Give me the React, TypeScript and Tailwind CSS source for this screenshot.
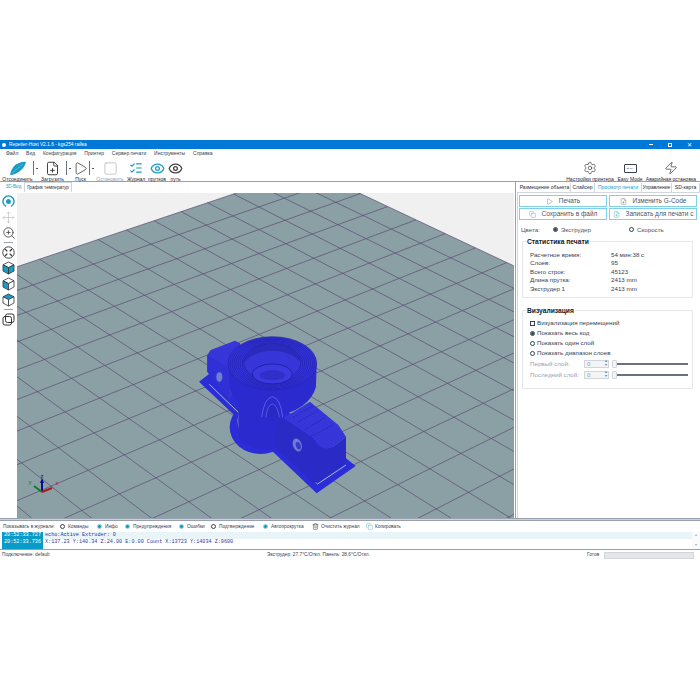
import { Copy, Eye, FilePlus, ListChecks, Move, Play, Settings, Square, Trash2, Zap, ZoomIn } from "lucide-react";
import type { ReactNode } from "react";

const F = [308, 169];
const V1 = [2597, -600];
const V2 = [-1326, -600];
const A = 0.0105;
const B = 0.0155;
const N = 30;

function pt(u: number, v: number) {
    const s = -A * u;
    const t = -B * v;
    const w = 1 + s + t;
    return [(F[0] + s * V1[0] + t * V2[0]) / w, (F[1] + s * V1[1] + t * V2[1]) / w];
}

function Floor() {
    const idx = Array.from({ length: N + 1 }, (_, i) => i);
    const poly = [pt(0, 0), pt(N, 0), pt(N, N), pt(0, N)].map((p) => p.join(",")).join(" ");
    return (
        <g>
            <polygon points={poly} fill="#8aa0a4" />
            {idx.map((i) => {
                const a = pt(i, 0);
                const b = pt(i, N);
                const c = pt(0, i);
                const d = pt(N, i);
                return (
                    <g key={i} stroke="#5b4a72" strokeWidth="0.7">
                        <line x1={a[0]} y1={a[1]} x2={b[0]} y2={b[1]} />
                        <line x1={c[0]} y1={c[1]} x2={d[0]} y2={d[1]} />
                    </g>
                );
            })}
        </g>
    );
}

function Model() {
    const rim = [133, 127, 121, 115, 109, 103, 97, 91];
    return (
        <g transform="translate(190 330) scale(0.3333)">
            <defs>
                <pattern id="fine" width="3" height="3" patternUnits="userSpaceOnUse" patternTransform="rotate(40)">
                    <rect width="3" height="3" fill="#2c2cd8" />
                    <rect width="3" height="1" fill="#2424bc" />
                </pattern>
                <pattern id="soft" width="6" height="6" patternUnits="userSpaceOnUse" patternTransform="rotate(-30)">
                    <rect width="6" height="6" fill="#3a3ae2" />
                    <rect width="6" height="2" fill="#2d2dc8" />
                </pattern>
            </defs>
            {/* brim */}
            <polygon points="27,155 60,130 150,200 300,250 497,408 380,490" fill="#2c2cd8" />
            <ellipse cx="212" cy="292" rx="93" ry="80" fill="#2c2cd8" />
            <path d="M58,163 L148,250 Q135,290 165,325 Q205,355 250,340 L383,462 L468,405" fill="none" stroke="#a9bdb9" strokeWidth="3" />
            {/* lower cylinder */}
            <path d="M145,200 L145,320 Q180,362 235,362 L285,340 L285,200 Z" fill="url(#fine)" />
            {/* left block */}
            <path d="M52,75 L62,60 L135,32 L150,40 L150,150 L118,210 L52,125 Z" fill="url(#soft)" />
            <path d="M52,75 L115,110 L118,210 L52,125 Z" fill="#3030d6" />
            <ellipse cx="88" cy="141" rx="9" ry="14" fill="#6f7fce" />
            {/* upper cylinder */}
            <path d="M115,100 L118,170 Q140,240 247,262 Q360,240 378,170 L380,100 Z" fill="url(#fine)" />
            <path d="M215,262 Q222,205 247,200 Q272,205 278,262" fill="none" stroke="#5a5ae6" strokeWidth="3" />
            <path d="M228,262 Q232,225 247,222 Q262,225 268,262" fill="#2828c4" stroke="#6a6aea" strokeWidth="2" />
            <ellipse cx="247" cy="100" rx="133" ry="80" fill="#3434de" />
            {rim.map((r) => (
                <ellipse key={r} cx="247" cy="100" rx={r} ry={r * 0.6} fill="none" stroke="#2020a8" strokeWidth="2" />
            ))}
            <ellipse cx="247" cy="97" rx="86" ry="55" fill="url(#soft)" stroke="#1c1c9c" strokeWidth="2" />
            <path d="M161,97 A86,55 0 0 1 333,97 Q300,62 247,62 Q195,62 161,97 Z" fill="#2a2abc" />
            <ellipse cx="247" cy="132" rx="60" ry="30" fill="#3a3ae0" stroke="#2222a8" strokeWidth="3" />
            <ellipse cx="247" cy="136" rx="38" ry="15" fill="#3030c8" />
            {/* right block */}
            <path d="M280,265 L360,215 L445,285 L468,320 L430,350 Q395,370 370,325 Z" fill="url(#soft)" />
            <path d="M310,262 L368,228 M325,275 L385,242 M345,300 L405,262 M360,320 L430,285" stroke="#2a2ac2" strokeWidth="4" strokeDasharray="5 4" />
            <path d="M255,290 L280,265 L370,325 Q395,370 430,350 L468,320 L468,398 L385,455 L370,460 L255,350 Z" fill="#2a2ac6" />
            <ellipse cx="322" cy="345" rx="13" ry="20" fill="#6f7fce" transform="rotate(-20 322 345)" />
            <ellipse cx="325" cy="347" rx="7" ry="12" fill="#3a3ad0" transform="rotate(-20 325 347)" />
        </g>
    );
}

function Axes() {
    return (
        <g fill="none" fontSize="6" fontFamily="Liberation Sans, sans-serif">
            <path d="M42,492 L42,481" stroke="#0a0a9a" strokeWidth="2" />
            <path d="M42,478 L40,483 L44,483 Z" fill="#0a0a9a" />
            <path d="M42,492 L52,488" stroke="#b01818" strokeWidth="2" />
            <path d="M42,492 L34,486" stroke="#127a2c" strokeWidth="2" />
            <text x="55.5" y="485" fill="#b01818" stroke="none">x</text>
            <text x="28.5" y="484" fill="#127a2c" stroke="none">y</text>
            <text x="40.5" y="478" fill="#0a0a9a" stroke="none">z</text>
        </g>
    );
}

function ToolButton({ label, width, muted, children }: { label: string; width: string; muted?: boolean; children: ReactNode }) {
    return (
        <div className={`flex flex-col items-center ${width}`}>
            <div className="h-[16px] flex items-center justify-center">{children}</div>
            <span className={`whitespace-nowrap text-[5px] leading-[6px] ${muted ? "text-gray-400" : "text-gray-800"}`}>{label}</span>
        </div>
    );
}

function Sep() {
    return (
        <div className="flex items-center h-[16px] gap-[2px] w-[6px]">
            <div className="w-px h-[14px] bg-gray-500" />
            <div className="w-[2px] h-px bg-gray-600" />
        </div>
    );
}

function Radio({ on, teal }: { on?: boolean; teal?: boolean }) {
    if (teal) {
        return (
            <span className="w-[5px] h-[5px] rounded-full bg-[#1c95b8] border border-[#9fd3e2] shrink-0" />
        );
    }
    return (
        <span className={`w-[5px] h-[5px] rounded-full border-[0.7px] border-gray-700 flex items-center justify-center shrink-0`}>
            {on && <span className="w-[3px] h-[3px] rounded-full bg-gray-700" />}
        </span>
    );
}

function ActionButton({ label, children }: { label: string; children: ReactNode }) {
    return (
        <div className="flex-1 h-[12px] border border-[#7fd0e8] flex items-center justify-center gap-[6px] text-[6.5px] text-gray-600">
            {children}
            <span className="whitespace-nowrap">{label}</span>
        </div>
    );
}

function Stat({ label, value }: { label: string; value: string }) {
    return (
        <div className="flex h-[8.5px] items-center">
            <span className="w-[81px]">{label}</span>
            <span>{value}</span>
        </div>
    );
}

function LayerInput({ label }: { label: string }) {
    return (
        <div className="flex items-center h-[11px] text-gray-400">
            <span className="w-[54px] whitespace-nowrap">{label}</span>
            <div className="w-[25px] h-[8px] border border-gray-300 bg-gray-100 flex items-center justify-between pl-[2px] pr-px">
                <span>0</span>
                <span className="text-[3.5px] leading-[3.5px] text-gray-500 text-center">▴<br />▾</span>
            </div>
            <div className="ml-[3px] w-[5px] h-[8px] bg-gray-100 border border-gray-300 rounded-[1px]" />
            <div className="w-[71px] h-[2px] bg-gray-500" />
        </div>
    );
}

function LogOption({ label, teal, width }: { label: string; teal?: boolean; width: string }) {
    return (
        <div className={`flex items-center gap-[3px] ${width}`}>
            <Radio teal={teal} />
            <span className="whitespace-nowrap">{label}</span>
        </div>
    );
}

function ViewIcon({ children }: { children: ReactNode }) {
    return <div className="h-[16px] w-full flex items-center justify-center">{children}</div>;
}

function CubeIcon({ top, left, right }: { top: string; left: string; right: string }) {
    return (
        <svg width="13" height="14" viewBox="0 0 13 14" stroke="#333" strokeWidth="0.8">
            <polygon points="6.5,1 12,3.8 6.5,6.6 1,3.8" fill={top} />
            <polygon points="1,3.8 6.5,6.6 6.5,13 1,10" fill={left} />
            <polygon points="12,3.8 6.5,6.6 6.5,13 12,10" fill={right} />
        </svg>
    );
}

export default function App() {
    return (
        <div className="w-[700px] h-[700px] bg-white font-['Liberation_Sans',sans-serif] text-gray-800 overflow-hidden">
            <div className="h-[140px]" />
            <div className="h-[420px] flex flex-col">
                <div className="h-[9px] shrink-0 bg-[#0078d7] flex items-center text-white text-[4.8px] pl-[2px]">
                    <span className="w-[4px] h-[4px] rounded-full bg-white mr-[3px]" />
                    <span>Repetier-Host V2.1.6 - kgs254 гайка</span>
                    <div className="ml-auto flex items-center gap-[15px] pr-[8px] text-[6px] leading-none">
                        <span className="w-[4px] h-px bg-white" />
                        <span className="w-[4px] h-[4px] border-[0.7px] border-white" />
                        <span>✕</span>
                    </div>
                </div>

                <div className="h-[10px] shrink-0 flex items-center gap-[7.8px] pl-[6px] text-[5px] text-gray-700">
                    <span>Файл</span>
                    <span>Вид</span>
                    <span>Конфигурация</span>
                    <span>Принтер</span>
                    <span>Сервер печати</span>
                    <span>Инструменты</span>
                    <span>Справка</span>
                </div>

                <div className="h-[23px] shrink-0 flex items-start pl-[2px] pt-[1px] border-b border-gray-400">
                    <ToolButton label="Отсоединить" width="w-[31px]">
                        <svg width="18" height="15" viewBox="0 0 18 15">
                            <path d="M1,14 Q3,4 10,2 Q15,0 17,1 Q16,6 11,10 Q6,14 1,14 Z" fill="#1a9cc4" />
                            <path d="M3,12 L14,3" stroke="#7cc8e0" strokeWidth="0.6" />
                        </svg>
                    </ToolButton>
                    <Sep />
                    <ToolButton label="Загрузить" width="w-[27px]">
                        <FilePlus size={15} strokeWidth={1.5} color="#333" />
                    </ToolButton>
                    <Sep />
                    <ToolButton label="Пуск" width="w-[17px]">
                        <Play size={15} strokeWidth={1.3} color="#444" />
                    </ToolButton>
                    <Sep />
                    <ToolButton label="Остановить" width="w-[30px]" muted>
                        <Square size={15} strokeWidth={1.2} color="#b5b5b5" />
                    </ToolButton>
                    <ToolButton label="Журнал" width="w-[22px]">
                        <ListChecks size={14} strokeWidth={2} color="#1a9cc4" />
                    </ToolButton>
                    <ToolButton label="прутков" width="w-[20px]">
                        <Eye size={15} strokeWidth={2.1} color="#1a9cc4" />
                    </ToolButton>
                    <ToolButton label="путь" width="w-[17px]">
                        <Eye size={15} strokeWidth={2.1} color="#444" />
                    </ToolButton>
                    <div className="ml-auto flex pr-[3px]">
                        <ToolButton label="Настройки принтера" width="w-[50px]">
                            <Settings size={14} strokeWidth={1.1} color="#333" />
                        </ToolButton>
                        <ToolButton label="Easy Mode" width="w-[30px]">
                            <div className="w-[13px] h-[9px] border border-gray-700 rounded-[1px] text-[2.5px] leading-[7px] text-center">EASY</div>
                        </ToolButton>
                        <ToolButton label="Аварийная остановка" width="w-[52px]">
                            <Zap size={14} strokeWidth={1.2} color="#333" />
                        </ToolButton>
                    </div>
                </div>

                <div className="h-[336px] shrink-0 flex">
                    <div className="w-[515px] flex flex-col">
                        <div className="h-[11px] shrink-0 flex items-start pl-[3px] text-[4.6px] bg-white whitespace-nowrap">
                            <span className="w-[21px] text-center text-[#1a9cc4] h-[10px] leading-[10px]">3D-Вид</span>
                            <span className="w-[48px] text-center border-x border-t border-gray-300 h-[10px] leading-[9px]">График температур</span>
                        </div>
                        <div className="flex-1 flex min-h-0">
                            <div className="w-[17px] flex flex-col items-center">
                                <ViewIcon>
                                    <svg width="13" height="13" viewBox="0 0 13 13" fill="none" stroke="#1a9cc4" strokeWidth="1.4">
                                        <path d="M4,11.3 A5.5,5.5 0 1 1 9,11.3" />
                                        <circle cx="6.5" cy="6.5" r="1.8" fill="#1a9cc4" />
                                    </svg>
                                </ViewIcon>
                                <ViewIcon><Move size={13} strokeWidth={1} color="#b0b0b0" /></ViewIcon>
                                <ViewIcon><ZoomIn size={14} strokeWidth={1.3} color="#333" /></ViewIcon>
                                <div className="w-[9px] h-px bg-gray-400 my-[1px]" />
                                <ViewIcon>
                                    <svg width="13" height="13" viewBox="0 0 13 13" fill="none" stroke="#333" strokeWidth="0.9">
                                        <circle cx="6.5" cy="6.5" r="5.7" />
                                        <path d="M3,3 L5.3,5.3 M10,3 L7.7,5.3 M3,10 L5.3,7.7 M10,10 L7.7,7.7" strokeWidth="1.2" />
                                    </svg>
                                </ViewIcon>
                                <ViewIcon><CubeIcon top="#fff" left="#1a9cc4" right="#1a9cc4" /></ViewIcon>
                                <ViewIcon><CubeIcon top="#fff" left="#1a9cc4" right="#fff" /></ViewIcon>
                                <ViewIcon><CubeIcon top="#1a9cc4" left="#fff" right="#fff" /></ViewIcon>
                                <div className="w-[9px] h-px bg-gray-400 my-[1px]" />
                                <ViewIcon>
                                    <svg width="13" height="13" viewBox="0 0 13 13" fill="none" stroke="#333" strokeWidth="1">
                                        <rect x="1" y="3.5" width="8.5" height="8.5" rx="2" />
                                        <rect x="3.5" y="1" width="8.5" height="8.5" rx="2" />
                                    </svg>
                                </ViewIcon>
                            </div>
                            <div className="flex-1 bg-white overflow-hidden">
                                <svg width="497" height="325" viewBox="17 193 497 325" className="block bg-[#f0f0f0]">
                                    <Floor />
                                    <Model />
                                    <Axes />
                                </svg>
                            </div>
                        </div>
                    </div>

                    <div className="flex-1 flex flex-col border-l border-gray-400 text-[6.2px]">
                        <div className="h-[10px] shrink-0 flex items-end text-[5px] pl-[3px] whitespace-nowrap">
                            <span className="w-[52px] h-[9px] leading-[9px] text-center border-r border-gray-300">Размещение объекта</span>
                            <span className="w-[24px] h-[9px] leading-[9px] text-center border-r border-gray-300">Слайсер</span>
                            <span className="w-[46px] h-[10px] leading-[10px] text-center text-[#1a9cc4]">Просмотр печати</span>
                            <span className="w-[31px] h-[9px] leading-[9px] text-center border-x border-gray-300">Управление</span>
                            <span className="w-[28px] h-[9px] leading-[9px] text-center border-r border-gray-300">SD-карта</span>
                        </div>
                        <div className="flex-1 border-t border-l border-gray-300 ml-px pl-[1px] pr-[3px] pt-[2px] flex flex-col text-gray-600">
                            <div className="flex gap-[2px]">
                                <ActionButton label="Печать"><Play size={7} strokeWidth={1.2} color="#555" /></ActionButton>
                                <ActionButton label="Изменить G-Code"><FilePlus size={7} strokeWidth={1.2} color="#555" /></ActionButton>
                            </div>
                            <div className="flex gap-[2px] mt-[1px]">
                                <ActionButton label="Сохранить в файл"><Copy size={7} strokeWidth={1.2} color="#1a9cc4" /></ActionButton>
                                <ActionButton label="Записать для печати с"><FilePlus size={7} strokeWidth={1.2} color="#1a9cc4" /></ActionButton>
                            </div>
                            <div className="flex items-center h-[9px] mt-[5px] text-[6.2px]">
                                <span className="w-[34px] pl-[2px]">Цвета:</span>
                                <Radio on />
                                <span className="ml-[3px] w-[68px]">Экструдер</span>
                                <Radio />
                                <span className="ml-[3px]">Скорость</span>
                            </div>
                            <div className="relative mt-[7px] ml-[3px] mr-[4px] h-[57px] shrink-0 border border-gray-200 pl-[7px] pt-[8px] text-gray-700">
                                <span className="absolute -top-[4px] left-[3px] bg-white px-px font-bold text-[6.7px] leading-[7px] text-gray-900 whitespace-nowrap">Статистика печати</span>
                                <Stat label="Расчетное время:" value="54 мин:38 с" />
                                <Stat label="Слоев:" value="95" />
                                <Stat label="Всего строк:" value="45123" />
                                <Stat label="Длина прутка:" value="2413 mm" />
                                <Stat label="Экструдер 1" value="2413 mm" />
                            </div>
                            <div className="relative mt-[12px] ml-[3px] mr-[4px] h-[79px] shrink-0 border border-gray-200 pl-[7px] pt-[7px] text-gray-700">
                                <span className="absolute -top-[4px] left-[3px] bg-white px-px font-bold text-[6.7px] leading-[7px] text-gray-900">Визуализация</span>
                                <div className="flex items-center gap-[2px] h-[10px]">
                                    <span className="w-[5px] h-[5px] border-[0.7px] border-gray-700" />
                                    <span>Визуализация перемещений</span>
                                </div>
                                <div className="flex items-center gap-[2px] h-[10px]"><Radio on /><span>Показать весь код</span></div>
                                <div className="flex items-center gap-[2px] h-[10px]"><Radio /><span>Показать один слой</span></div>
                                <div className="flex items-center gap-[2px] h-[10px]"><Radio /><span>Показать диапазон слоев</span></div>
                                <LayerInput label="Первый слой:" />
                                <LayerInput label="Последний слой:" />
                            </div>
                        </div>
                    </div>
                </div>

                <div className="h-[3px] shrink-0 bg-[#d0d0d0] border-y border-gray-400" />
                <div className="h-[11px] shrink-0 flex items-center pl-[3px] text-[4.8px] text-gray-700">
                    <span className="w-[57px]">Показывать в журнале:</span>
                    <LogOption label="Команды" width="w-[37px]" />
                    <LogOption label="Инфо" width="w-[28px]" teal />
                    <LogOption label="Предупреждения" width="w-[54px]" teal />
                    <LogOption label="Ошибки" width="w-[32px]" teal />
                    <LogOption label="Подтверждение" width="w-[52px]" />
                    <LogOption label="Автопрокрутка" width="w-[49px]" teal />
                    <div className="flex items-center gap-[2px] w-[54px]"><Trash2 size={7} strokeWidth={1.6} color="#333" /><span>Очистить журнал</span></div>
                    <div className="flex items-center gap-[2px]"><Copy size={7} strokeWidth={1.2} color="#1a9cc4" /><span>Копировать</span></div>
                </div>
                <div className="h-[18px] shrink-0 flex border-b border-gray-400 pl-[2px] font-['Liberation_Mono',monospace] text-[5.15px] leading-[7px]">
                    <div className="w-[41px] bg-[#0a9cc8] text-white text-center">
                        <div>20:52:33.727</div>
                        <div>20:52:33.736</div>
                    </div>
                    <div className="flex-1 text-[#3333aa]">
                        <div className="bg-[#e8f4f8] pl-[2px]">echo:Active Extruder: 0</div>
                        <div className="pl-[2px]">X:137.23 Y:140.34 Z:24.00 E:0.00 Count X:13723 Y:14034 Z:9600</div>
                    </div>
                    <div className="w-[8px] flex flex-col justify-between items-center text-[4px] text-gray-500 bg-gray-50">
                        <span>▴</span>
                        <span>▾</span>
                    </div>
                </div>
                <div className="h-[10px] shrink-0 flex items-center pl-[2px] text-[4.8px] text-gray-700">
                    <span className="w-[265px]">Подключение: default</span>
                    <span className="w-[320px]">Экструдер: 27,7°C/Откл. Панель: 28,6°C/Откл.</span>
                    <span className="w-[17px]">Готов</span>
                    <div className="w-[90px] h-[7px] bg-[#e6e6e6] border border-gray-300" />
                </div>
            </div>
        </div>
    );
}
